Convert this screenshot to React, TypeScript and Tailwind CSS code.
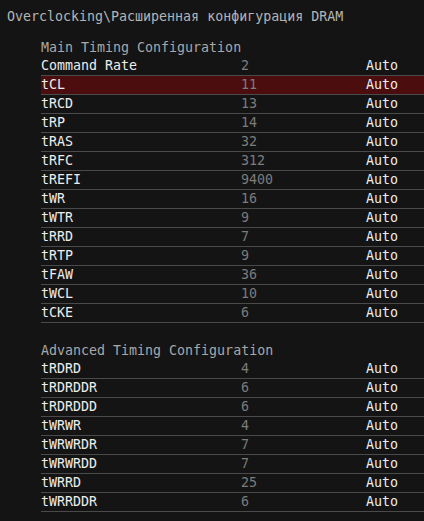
import React from "react";

const main: [string, string][] = [
  ["Command Rate", "2"],
  ["tCL", "11"],
  ["tRCD", "13"],
  ["tRP", "14"],
  ["tRAS", "32"],
  ["tRFC", "312"],
  ["tREFI", "9400"],
  ["tWR", "16"],
  ["tWTR", "9"],
  ["tRRD", "7"],
  ["tRTP", "9"],
  ["tFAW", "36"],
  ["tWCL", "10"],
  ["tCKE", "6"],
];

const adv: [string, string][] = [
  ["tRDRD", "4"],
  ["tRDRDDR", "6"],
  ["tRDRDDD", "6"],
  ["tWRWR", "4"],
  ["tWRWRDR", "7"],
  ["tWRWRDD", "7"],
  ["tWRRD", "25"],
  ["tWRRDDR", "6"],
];

function Row({ label, value, active }: { label: string; value: string; active?: boolean }) {
  return (
    <div
      className={`flex h-[19px] items-center border-b border-[#4a4a4a] leading-[18px] ${
        active ? "bg-[#4b0d0e]" : ""
      }`}
    >
      <div className="w-[200px] text-[#ededed]">{label}</div>
      <div className="w-[125px] text-[#7c7c7c]">{value}</div>
      <div className="text-[#ededed]">Auto</div>
    </div>
  );
}

export default function App() {
  return (
    <div
      className="h-[521px] w-[424px] overflow-hidden bg-[#141414] text-[13.3px]"
      style={{ fontFamily: '"DejaVu Sans Mono", monospace' }}
    >
      <div className="pl-[7px] pt-[8px] leading-[18px] text-[#b4b4b4]">
        Overclocking\Расширенная конфигурация DRAM
      </div>
      <div className="ml-[41px] mt-[13px]">
        <div className="h-[18px] leading-[18px] text-[#a8a8a8]">Main Timing Configuration</div>
        {main.map(([l, v], i) => (
          <Row key={l} label={l} value={v} active={i === 1} />
        ))}
        <div className="h-[19px]" />
        <div className="h-[18px] leading-[18px] text-[#a8a8a8]">Advanced Timing Configuration</div>
        {adv.map(([l, v]) => (
          <Row key={l} label={l} value={v} />
        ))}
      </div>
    </div>
  );
}
